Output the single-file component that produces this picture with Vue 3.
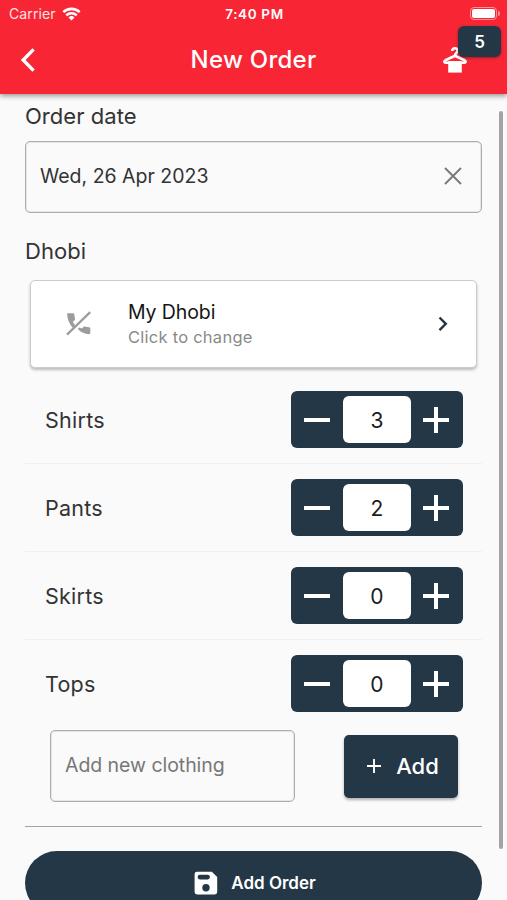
<script setup>
import { ref, computed } from 'vue'

const items = ref([
  { name: 'Shirts', count: 3 },
  { name: 'Pants', count: 2 },
  { name: 'Skirts', count: 0 },
  { name: 'Tops', count: 0 },
])
const total = computed(() => items.value.reduce((sum, item) => sum + item.count, 0))
const change = (item, step) => {
  item.count = Math.max(0, item.count + step)
}
</script>

<template>
  <div class="screen">
    <header class="top">
      <div class="status">
        <div class="carrier">
          <span>Carrier</span>
          <svg class="wifi" viewBox="0 0 20 14" fill="none" stroke="#fff" stroke-width="2.7">
            <path d="M1.4 5.1a12.3 12.3 0 0 1 17.2 0" />
            <path d="M4.5 8.4a7.9 7.9 0 0 1 11 0" />
            <path d="M10 13.8 6.9 10.7a4.5 4.5 0 0 1 6.2 0z" fill="#fff" stroke="none" />
          </svg>
        </div>
        <span class="time">7:40 PM</span>
        <div class="battery"><i class="cell"><b></b></i><i class="tip"></i></div>
      </div>
      <div class="bar">
        <button class="back" aria-label="Back">
          <svg viewBox="0 0 16 26" fill="none" stroke="#fff" stroke-width="3.4">
            <path d="M13.6 2.4 3.2 13l10.4 10.6" />
          </svg>
        </button>
        <h1>New Order</h1>
        <div class="basket">
          <svg viewBox="0 0 24 27" fill="none" stroke="#fff" stroke-linejoin="round">
            <path d="M9.2 5.1C9.2 3.100 10.300 2.200 11.900 2.200s2.700 1.100 2.700 2.600c0 2.100-2.600 2.200-2.600 4.700" stroke-width="2.6" />
            <path d="M6 16.800H3.200c-2.100 0-2.400-1.700-.8-2.500L12 9.800l9.600 4.500c1.600.8 1.300 2.500-.8 2.500H18" stroke-width="2.6" />
            <path d="M5.200 15h13.600v11.600H5.200z" fill="#fff" stroke="none" />
          </svg>
          <span class="badge">{{ total }}</span>
        </div>
      </div>
    </header>

    <main class="body">
      <h2 class="label">Order date</h2>
      <div class="field date">
        <span>Wed, 26 Apr 2023</span>
        <svg viewBox="0 0 18 18" fill="none" stroke="#7b7b7b" stroke-width="2">
          <path d="m1 1 16 16M17 1 1 17" />
        </svg>
      </div>

      <h2 class="label dhobi-label">Dhobi</h2>
      <div class="card">
        <svg class="phone" viewBox="0 0 26 26" fill="#9c9c9c">
          <path d="M2.200 2.300H7c.8 0 1.200.4 1.300 1.200.1 1.400.4 2.700.8 4 .2.600 0 1.100-.4 1.500l-1.800 1.800c.7 1.600 1.400 2.500 2.300 3.500L6.700 16.800C3.500 13.200 1.500 8.600 1.100 3.400c0-.7.4-1.100 1.100-1.100z" />
          <path d="m11.800 18 1.600-1.600 2.400 1.200 1.700-1.700c.4-.4.900-.5 1.500-.4 1.300.4 2.600.7 4 .7.700 0 1.300.5 1.300 1.200V22c0 .7-.6 1.200-1.300 1.200-4.200-.2-8-1.600-11.200-5.200z" />
          <path d="M1 23.600 24.200 1.200" stroke="#9c9c9c" stroke-width="2.3" />
        </svg>
        <div class="who">
          <strong>My Dhobi</strong>
          <span>Click to change</span>
        </div>
        <svg class="next" viewBox="0 0 10 16" fill="none" stroke="#233746" stroke-width="2.4">
          <path d="m1.500 1.500 6.300 6.300-6.300 6.300" />
        </svg>
      </div>

      <ul class="items">
        <li v-for="item in items" :key="item.name">
          <span>{{ item.name }}</span>
          <div class="stepper">
            <button aria-label="Less" @click="change(item, -1)">
              <svg viewBox="0 0 28 28"><path d="M1 14h26" /></svg>
            </button>
            <output>{{ item.count }}</output>
            <button aria-label="More" @click="change(item, 1)">
              <svg viewBox="0 0 28 28"><path d="M1 14h26M14 1v26" /></svg>
            </button>
          </div>
        </li>
      </ul>

      <div class="new">
        <div class="field clothing">Add new clothing</div>
        <button class="add">
          <svg viewBox="0 0 14 14" stroke="#fff" stroke-width="1.9"><path d="M0 7h14M7 0v14" /></svg>
          <span>Add</span>
        </button>
      </div>

      <button class="submit">
        <svg viewBox="0 0 24 24">
          <path fill-rule="evenodd" fill="#fff" d="M3 .8h14.800l5.400 5.300V21a2.400 2.400 0 0 1-2.400 2.400H3A2.400 2.400 0 0 1 .6 21V3.200A2.400 2.400 0 0 1 3 .8zM5.900 3.800a2.300 2.300 0 0 0 0 4.600h7.700a2.300 2.300 0 0 0 0-4.600zM12 13a3.700 3.700 0 1 0 0 7.400 3.700 3.700 0 0 0 0-7.400z" />
        </svg>
        <span>Add Order</span>
      </button>
      <i class="scroll"></i>
    </main>
  </div>
</template>

<style>
body {
  background: #fafafa;
  overflow: hidden;
}
</style>

<style scoped>
* {
  box-sizing: border-box;
}
.screen {
  display: flex;
  flex-direction: column;
  height: 900px;
  overflow: hidden;
  background: #fafafa;
  color: #333;
  font-family: Inter, 'Liberation Sans', sans-serif;
}
button {
  border: 0;
  padding: 0;
  background: none;
  color: #fff;
  font-family: inherit;
}
svg {
  display: block;
  flex: none;
}
h1,
h2 {
  margin: 0;
  font-weight: 400;
}
.top {
  position: relative;
  z-index: 1;
  flex: none;
  height: 94px;
  background: #f82535;
  color: #fff;
  box-shadow: 0 2px 5px rgba(0, 0, 0, 0.4);
}
.status {
  display: grid;
  grid-template-columns: 1fr auto 1fr;
  align-items: center;
  height: 27px;
  padding: 0 7px 0 9px;
  font-size: 14px;
}
.carrier {
  display: flex;
  align-items: center;
  gap: 6px;
  color: #ffe3e4;
  letter-spacing: 0.1px;
}
.wifi {
  width: 19px;
  height: 14px;
}
.time {
  font-size: 13.5px;
  font-weight: 600;
  letter-spacing: 0.65px;
}
.battery {
  display: flex;
  align-items: center;
  justify-content: flex-end;
  gap: 1px;
}
.cell {
  width: 27px;
  height: 13px;
  padding: 1px;
  border: 1px solid #ff9297;
  border-radius: 4px;
}
.cell b {
  display: block;
  height: 100%;
  border-radius: 2px;
  background: #fff;
}
.tip {
  width: 2px;
  height: 5px;
  border-radius: 0 2px 2px 0;
  background: #ff9297;
}
.bar {
  display: grid;
  grid-template-columns: 1fr auto 1fr;
  align-items: center;
  height: 65px;
  padding: 0 40px 0 20px;
}
.bar h1 {
  margin-left: 20px;
  font-size: 24px;
  font-weight: 500;
  letter-spacing: 0.25px;
}
.back svg {
  width: 16px;
  height: 26px;
}
.basket {
  position: relative;
  justify-self: end;
}
.basket svg {
  width: 24px;
  height: 27px;
}
.badge {
  position: absolute;
  left: 15px;
  top: -20px;
  width: 43px;
  height: 31px;
  border-radius: 6px;
  background: #233746;
  box-shadow: 0 1px 3px rgba(0, 0, 0, 0.35);
  font-size: 17px;
  font-weight: 600;
  line-height: 33px;
  text-align: center;
}
.body {
  position: relative;
  flex: none;
  display: flex;
  flex-direction: column;
  padding: 8px 25px 0;
}
.label {
  font-size: 22px;
  line-height: 28px;
  letter-spacing: 0.05px;
}
.field {
  display: flex;
  align-items: center;
  height: 72px;
  border: 1px solid #adadad;
  border-radius: 5px;
  box-shadow: inset 0 0 0 1px #e6e6e6;
  font-size: 19.5px;
}
.date {
  justify-content: space-between;
  margin-top: 11px;
  padding: 0 19px 2px 14px;
}
.date svg {
  width: 18px;
  height: 18px;
}
.dhobi-label {
  margin-top: 24px;
}
.card {
  display: flex;
  align-items: center;
  height: 88px;
  margin: 15px 5px 0;
  padding: 0 28px 0 35px;
  border: 1px solid #ccc;
  border-radius: 5px;
  background: #fff;
  box-shadow: 0 2px 3px rgba(0, 0, 0, 0.25);
}
.phone {
  width: 26px;
  height: 26px;
}
.who {
  flex: 1;
  display: flex;
  flex-direction: column;
  margin-left: 36px;
}
.who strong {
  color: #151515;
  font-size: 19.5px;
  font-weight: 400;
  line-height: 26px;
  letter-spacing: -0.1px;
}
.who span {
  color: #8a8a8a;
  font-size: 16.5px;
  line-height: 24px;
  letter-spacing: 0.25px;
}
.next {
  width: 10px;
  height: 16px;
}
.items {
  margin: 8px 0 0;
  padding: 0;
  list-style: none;
}
.items li {
  display: flex;
  align-items: center;
  justify-content: space-between;
  height: 88px;
  padding: 0 19px 0 20px;
  border-bottom: 1px solid #f0f0f0;
  font-size: 21.5px;
  letter-spacing: 0.25px;
}
.items li:last-child {
  border-color: transparent;
}
.stepper {
  display: grid;
  grid-template-columns: 52px 68px 52px;
  align-items: center;
  height: 57px;
  border-radius: 6px;
  background: #233746;
}
.stepper button {
  display: grid;
  place-items: center;
}
.stepper button:last-child {
  padding-right: 2px;
}
.stepper svg {
  width: 28px;
  height: 28px;
  stroke: #fff;
  stroke-width: 4px;
}
.stepper output {
  height: 47px;
  border-radius: 6px;
  background: #fff;
  color: #1c1c1c;
  font-size: 21px;
  line-height: 49px;
  text-align: center;
}
.new {
  display: flex;
  align-items: center;
  justify-content: space-between;
  height: 99px;
  padding: 0 24px 22px 25px;
  border-bottom: 1px solid #a3a3a3;
}
.clothing {
  width: 245px;
  padding: 0 14px 2px;
  color: #777;
  letter-spacing: -0.05px;
}
.add {
  display: flex;
  align-items: center;
  justify-content: center;
  gap: 15px;
  width: 114px;
  height: 63px;
  padding-left: 4px;
  border-radius: 5px;
  background: #233746;
  box-shadow: 0 2px 3px rgba(0, 0, 0, 0.3);
  font-size: 22px;
  font-weight: 500;
}
.add svg {
  width: 14px;
  height: 14px;
}
.submit {
  display: flex;
  align-items: center;
  justify-content: center;
  gap: 13px;
  height: 64px;
  margin-top: 24px;
  padding-left: 3px;
  border-radius: 32px;
  background: #233746;
  font-size: 17px;
  font-weight: 600;
}
.submit svg {
  width: 24px;
  height: 24px;
}
.scroll {
  position: absolute;
  top: 17px;
  right: 4px;
  width: 4px;
  height: 738px;
  border-radius: 2px;
  background: #a3a3a3;
}
</style>
